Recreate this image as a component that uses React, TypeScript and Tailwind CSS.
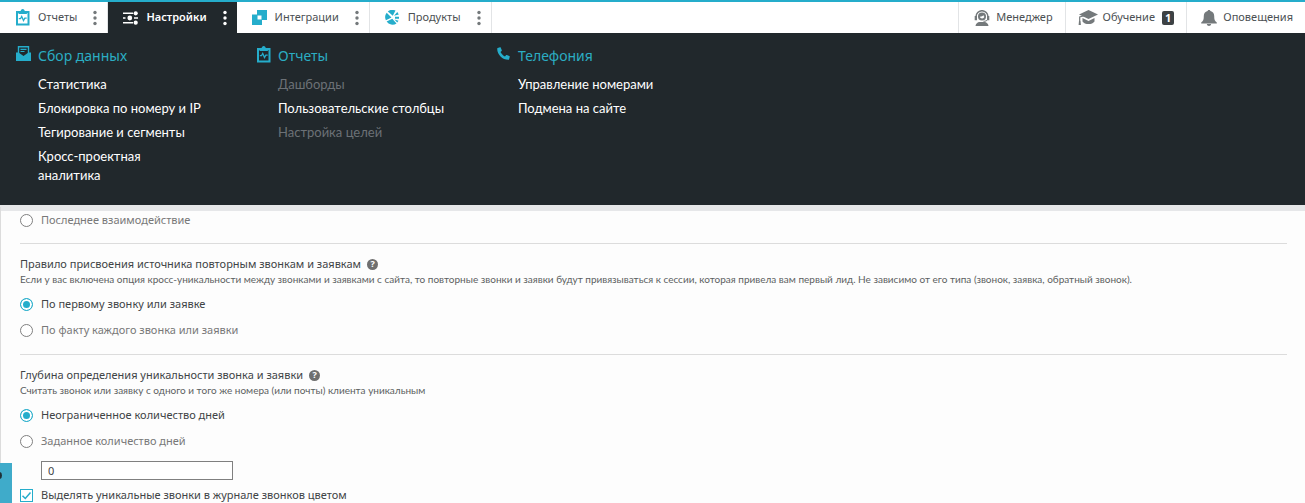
import { useState } from "react";
import type { ReactNode } from "react";

interface MenuItem {
  label: string;
  disabled?: boolean;
}

interface MenuGroup {
  title: string;
  icon: ReactNode;
  items: MenuItem[];
}

const ClipboardIcon = () => (
  <svg width="15" height="17" viewBox="0 0 15 17" fill="none" aria-hidden="true">
    <path d="M2 3h11.500v12.500H2z" stroke="currentColor" strokeWidth="2" />
    <path d="M3.500 5V2.500h2C5.700 1 6.500 0 7.700 0s2 1 2.200 2.500h2V5z" fill="currentColor" />
    <path d="M3.800 9.700h1.700l1.200-2.200 1.800 4 1.300-2.400h1.900" stroke="currentColor" strokeWidth="1.300" />
  </svg>
);

const SlidersIcon = () => (
  <svg width="15" height="14" viewBox="0 0 15 14" fill="none" aria-hidden="true">
    <path d="M0 2.300h10M0 7h2.500M11 7h4M0 11.700h10" stroke="currentColor" strokeWidth="1.500" />
    <circle cx="12.700" cy="2.300" r="2.100" fill="currentColor" />
    <circle cx="6.800" cy="7" r="2.400" fill="currentColor" />
    <circle cx="12.700" cy="11.700" r="2.100" fill="currentColor" />
  </svg>
);

const IntegrationIcon = () => (
  <svg width="15" height="15" viewBox="0 0 15 15" aria-hidden="true">
    <path
      d="M5 0h10v10h-5v5H0V4.500h5zM5.500 5.500v4h4v-4z"
      fill="currentColor"
      fillRule="evenodd"
    />
  </svg>
);

const ProductsIcon = () => (
  <svg width="15" height="15" viewBox="0 0 15 15" aria-hidden="true">
    <path d="M2.800 1.500A7.200 7.200 0 0 1 10.500.6L7.800 5.700z" fill="currentColor" />
    <path d="M1.700 2.700 6.500 7.400.9 10.300a7.300 7.300 0 0 1 .8-7.600z" fill="currentColor" />
    <path d="M1.600 11.500l5.700-2.800 4.200 4.800a7.200 7.200 0 0 1-9.900-2z" fill="currentColor" />
    <path d="M9 5.800 12.300 2l1.500 2.500zM10 6.700h4v2h-4zM9.500 9.600l4 1.200-1.300 1.800z" fill="currentColor" />
  </svg>
);

const ManagerIcon = () => (
  <svg width="16" height="16" viewBox="0 0 16 16" fill="none" aria-hidden="true">
    <path d="M2 7a6 6.300 0 0 1 12 0" stroke="currentColor" strokeWidth="1.500" />
    <path d="M.7 6H3v4.200H.7zM13 6h2.300v4.200H13z" fill="currentColor" />
    <path d="M13.500 9.500c-.5 1.300-1.900 1.800-4 1.800" stroke="currentColor" />
    <circle cx="8" cy="6.600" r="4" fill="currentColor" />
    <path d="M5.800 6.800c1.800 0 3-.7 3.600-1.700.2 1 .6 1.500 1 1.700a2.400 2.400 0 0 1-4.600 0z" fill="white" />
    <path d="M1.500 16c.3-2.400 2-3.700 4-3.900h5c2 .2 3.700 1.500 4 3.900z" fill="currentColor" />
  </svg>
);

const EducationIcon = () => (
  <svg width="20" height="16" viewBox="0 0 20 16" fill="none" aria-hidden="true">
    <path d="M10.500 0 20 4.500 10.500 9 1 4.500z" fill="currentColor" />
    <path d="M4.500 8v3.500c2 3.400 10 3.400 12 0V8l-6 3z" fill="currentColor" />
    <path d="M10.500 4.500 1.700 7v4" stroke="currentColor" strokeWidth="1.200" />
    <path d="M1 11h1.500l.4 4H.6z" fill="currentColor" />
  </svg>
);

const BellIcon = () => (
  <svg width="16" height="16" viewBox="0 0 16 16" aria-hidden="true">
    <path
      d="M8 0c.9 0 1.300.4 1.400 1.100 2.500.7 3.800 2.500 3.800 5 0 3.300.4 4.900 2.600 6.400v1H.2v-1c2.200-1.500 2.600-3.100 2.600-6.400 0-2.500 1.300-4.300 3.800-5C6.700.4 7.100 0 8 0z"
      fill="currentColor"
    />
    <path d="M5.800 14h4.400c-.2 1.300-1 2-2.200 2s-2-.7-2.200-2z" fill="currentColor" />
  </svg>
);

const InboxIcon = () => (
  <svg width="15" height="15" viewBox="0 0 15 15" fill="none" aria-hidden="true">
    <path d="M2.500 8V.7h10V8" stroke="currentColor" strokeWidth="1.400" />
    <path d="M4.500 3.300h6M4.500 5.500h4" stroke="currentColor" strokeWidth="1.200" />
    <path d="M0 6.500h2.500L7.500 10l5-3.500H15V15H0z" fill="currentColor" />
  </svg>
);

const PhoneIcon = () => (
  <svg width="15" height="15" viewBox="-1 -1 15 15" aria-hidden="true">
    <path
      d="M.7 1 3 .3c.4-.1.700.1.8.4l1 2.500c.1.3 0 .6-.2.8L3.500 5c.9 1.900 2.500 3.500 4.500 4.500l1-1.200c.2-.2.500-.3.800-.2l2.500 1c.4.2.5.500.4.9l-.6 2.300c-.1.4-.3.500-.7.500C5.400 12.800.2 7.600.2 1.700.2 1.300.4 1.100.7 1z"
      fill="currentColor"
    />
  </svg>
);

const DotsIcon = () => (
  <svg width="4" height="16" viewBox="0 0 4 16" fill="currentColor" aria-hidden="true">
    <circle cx="2" cy="2.500" r="1.700" />
    <circle cx="2" cy="8" r="1.700" />
    <circle cx="2" cy="13.500" r="1.700" />
  </svg>
);

const tabs = [
  { label: "Отчеты", icon: <ClipboardIcon /> },
  { label: "Настройки", icon: <SlidersIcon /> },
  { label: "Интеграции", icon: <IntegrationIcon /> },
  { label: "Продукты", icon: <ProductsIcon /> },
];

const menuGroups: MenuGroup[] = [
  {
    title: "Сбор данных",
    icon: <InboxIcon />,
    items: [
      { label: "Статистика" },
      { label: "Блокировка по номеру и IP" },
      { label: "Тегирование и сегменты" },
      { label: "Кросс-проектная аналитика" },
    ],
  },
  {
    title: "Отчеты",
    icon: <ClipboardIcon />,
    items: [
      { label: "Дашборды", disabled: true },
      { label: "Пользовательские столбцы" },
      { label: "Настройка целей", disabled: true },
    ],
  },
  {
    title: "Телефония",
    icon: <PhoneIcon />,
    items: [{ label: "Управление номерами" }, { label: "Подмена на сайте" }],
  },
];

const TopBar = () => {
  const [active, setActive] = useState("Настройки");

  return (
    <header className="flex justify-between border-t-2 border-[#25adcb] bg-white text-[11px] text-[#4b5053]">
      <nav className="flex">
        {tabs.map((tab) => {
          const isActive = tab.label === active;
          return (
            <div
              key={tab.label}
              className={
                isActive
                  ? "flex h-[31px] items-center bg-[#21282c] pr-2 pl-[15px] font-semibold text-white"
                  : "flex h-[31px] items-center border-r border-[#e2e4e6] pr-2 pl-[15px]"
              }
            >
              <button className="flex items-center gap-2" onClick={() => setActive(tab.label)}>
                <span className={isActive ? "text-white" : "text-[#25adcb]"}>{tab.icon}</span>
                {tab.label}
              </button>
              <button
                className={isActive ? "ml-3.5 px-0.5 text-white" : "ml-3.5 px-0.5 text-[#74797b]"}
                aria-label={tab.label}
              >
                <DotsIcon />
              </button>
            </div>
          );
        })}
      </nav>
      <div className="flex">
        <button className="flex items-center gap-1.5 border-l border-[#e2e4e6] pr-3 pl-[15px]">
          <span className="text-[#74797b]">
            <ManagerIcon />
          </span>
          Менеджер
        </button>
        <button className="flex items-center gap-[5px] border-l border-[#e2e4e6] px-3">
          <span className="text-[#74797b]">
            <EducationIcon />
          </span>
          Обучение
          <span className="ml-0.5 rounded-xs bg-[#3d4244] px-[3px] text-[11px] leading-[14px] font-bold text-white">
            1
          </span>
        </button>
        <button className="flex items-center gap-1.5 border-l border-[#e2e4e6] pr-3 pl-3.5">
          <span className="text-[#74797b]">
            <BellIcon />
          </span>
          Оповещения
        </button>
      </div>
    </header>
  );
};

const SettingsMenu = () => (
  <div className="flex min-h-[172px] bg-[#21282c] px-[15px] pt-3">
    {menuGroups.map((group) => (
      <section key={group.title} className="flex w-60">
        <span className="w-[23px] shrink-0 pt-px pl-px text-[#25adcb]">{group.icon}</span>
        <div className="w-[167px]">
          <h2 className="text-sm leading-[22px] text-[#2badc3]">{group.title}</h2>
          <ul className="mt-2 flex flex-col gap-[5px] font-['Lato','Noto_Sans',sans-serif] text-[13px] leading-[19px]">
            {group.items.map((item) => (
              <li key={item.label}>
                {item.disabled ? (
                  <span className="text-[#6c7176]">{item.label}</span>
                ) : (
                  <a href="#" className="text-white">
                    {item.label}
                  </a>
                )}
              </li>
            ))}
          </ul>
        </div>
      </section>
    ))}
  </div>
);

interface RadioProps {
  name: string;
  label: string;
  checked: boolean;
  onChange: () => void;
}

const Radio = ({ name, label, checked, onChange }: RadioProps) => (
  <label
    className={
      checked
        ? "flex h-[26px] items-center gap-2 text-[11px] text-[#3f4446]"
        : "flex h-[26px] items-center gap-2 text-[11px] text-[#787878]"
    }
  >
    <input
      type="radio"
      name={name}
      checked={checked}
      onChange={onChange}
      className="size-[13px] appearance-none rounded-full border border-[#808080] bg-white checked:border-[#25adcb] checked:bg-[#25adcb] checked:shadow-[inset_0_0_0_2px_white]"
    />
    {label}
  </label>
);

interface SectionHeadProps {
  title: string;
  hint: string;
}

const SectionHead = ({ title, hint }: SectionHeadProps) => (
  <>
    <h3 className="flex items-center gap-1.5 text-[11px] leading-4 text-[#3f4446]">
      {title}
      <button
        aria-label="Справка"
        className="flex size-[11px] items-center justify-center rounded-full bg-[#6f6f6f] text-[9px] font-bold text-white"
      >
        ?
      </button>
    </h3>
    <p className="font-['Lato','Noto_Sans',sans-serif] text-[10px] leading-[15px] text-[#5c5f61]">
      {hint}
    </p>
  </>
);

export default function App() {
  const [lastTouch, setLastTouch] = useState(false);
  const [rule, setRule] = useState("first");
  const [depth, setDepth] = useState("unlimited");
  const [days, setDays] = useState("0");
  const [highlight, setHighlight] = useState(true);

  return (
    <div className="relative overflow-hidden bg-[#fdfdfd] font-['Noto_Sans',sans-serif]">
      <TopBar />
      <SettingsMenu />
      <main className="border-t-6 border-[#e6e7e9]">
        <div className="border-l border-[#dcdcdc] pr-[18px] pl-[19px]">
          <div className="-mt-1 border-b border-[#dcdcdc] pb-2.5">
            <Radio
              name="source"
              label="Последнее взаимодействие"
              checked={lastTouch}
              onChange={() => setLastTouch(true)}
            />
          </div>
          <section className="border-b border-[#dcdcdc] pt-3 pb-[11px]">
            <SectionHead
              title="Правило присвоения источника повторным звонкам и заявкам"
              hint="Если у вас включена опция кросс-уникальности между звонками и заявками с сайта, то повторные звонки и заявки будут привязываться к сессии, которая привела вам первый лид. Не зависимо от его типа (звонок, заявка, обратный звонок)."
            />
            <div className="mt-1">
              <Radio
                name="rule"
                label="По первому звонку или заявке"
                checked={rule === "first"}
                onChange={() => setRule("first")}
              />
              <Radio
                name="rule"
                label="По факту каждого звонка или заявки"
                checked={rule === "each"}
                onChange={() => setRule("each")}
              />
            </div>
          </section>
          <section className="pt-3">
            <SectionHead
              title="Глубина определения уникальности звонка и заявки"
              hint="Считать звонок или заявку с одного и того же номера (или почты) клиента уникальным"
            />
            <div className="mt-1">
              <Radio
                name="depth"
                label="Неограниченное количество дней"
                checked={depth === "unlimited"}
                onChange={() => setDepth("unlimited")}
              />
              <Radio
                name="depth"
                label="Заданное количество дней"
                checked={depth === "custom"}
                onChange={() => setDepth("custom")}
              />
            </div>
            <input
              type="text"
              aria-label="Количество дней"
              value={days}
              onChange={(e) => setDays(e.target.value)}
              className="mt-[7px] ml-[21px] block h-[19px] w-48 border border-[#808080] bg-white px-1.5 text-[11px] text-[#3f4446]"
            />
            <label className="mt-[7px] flex h-4 items-center gap-2 text-[11px] text-[#3f4446]">
              <span className="grid">
                <input
                  type="checkbox"
                  checked={highlight}
                  onChange={(e) => setHighlight(e.target.checked)}
                  className="peer col-start-1 row-start-1 size-[13px] appearance-none border border-[#25adcb] bg-white"
                />
                <svg
                  viewBox="0 0 13 13"
                  fill="none"
                  aria-hidden="true"
                  className="pointer-events-none invisible col-start-1 row-start-1 size-[13px] peer-checked:visible"
                >
                  <path d="M2.500 6.800 5.300 9.500l5.200-6" stroke="#25adcb" strokeWidth="1.500" />
                </svg>
              </span>
              Выделять уникальные звонки в журнале звонков цветом
            </label>
          </section>
        </div>
      </main>
      <button
        aria-label="Открыть панель"
        className="absolute bottom-0 left-0 h-10 w-3 overflow-hidden bg-[#3fabca]"
      >
        <svg width="12" height="40" viewBox="0 0 12 40" aria-hidden="true">
          <ellipse cx="-1" cy="12.500" rx="3" ry="3.500" fill="#1f3138" />
        </svg>
      </button>
    </div>
  );
}
